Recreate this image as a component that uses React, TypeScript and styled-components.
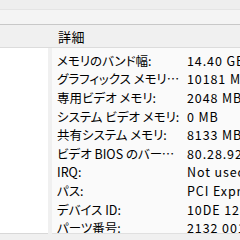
import styled, { createGlobalStyle } from "styled-components";

const GlobalStyle = createGlobalStyle`
  html, body {
    margin: 0;
    padding: 0;
    width: 240px;
    height: 240px;
    overflow: hidden;
    background: #f0f0f0;
  }
`;

// 情報の一覧データ
const rows: [string, string][] = [
  ["メモリのバンド幅:", "14.40 GB/s"],
  ["グラフィックス メモリの合計:", "10181 MB"],
  ["専用ビデオ メモリ:", "2048 MB"],
  ["システム ビデオ メモリ:", "0 MB"],
  ["共有システム メモリ:", "8133 MB"],
  ["ビデオ BIOS のバージョン:", "80.28.92.00.01"],
  ["IRQ:", "Not used"],
  ["パス:", "PCI Express x16 Gen2"],
  ["デバイス ID:", "10DE 1287 3626 1458"],
  ["パーツ番号:", "2132 0010"],
];

const Window = styled.div`
  width: 240px;
  height: 240px;
  display: flex;
  flex-direction: column;
  font-family: "Noto Sans CJK JP", "DejaVu Sans", sans-serif;
  color: #000;
`;

const Band = styled.div<{ $h: number; $bg: string; $line: string }>`
  height: ${(p) => p.$h}px;
  flex-shrink: 0;
  background: ${(p) => p.$bg};
  border-bottom: 1px solid ${(p) => p.$line};
`;

const HeaderBar = styled.div`
  height: 22px;
  flex-shrink: 0;
  background: #f0f0f0;
  border-bottom: 1px solid #dcdcdc;
  display: flex;
  align-items: center;
  padding-left: 58px;
  font-size: 13px;
  letter-spacing: 0.5px;
`;

const Body = styled.div`
  flex: 1;
  display: flex;
  min-height: 0;
`;

const LeftPane = styled.div`
  width: 48px;
  flex-shrink: 0;
  background: #ffffff;
  border-bottom: 1px solid #d8d8d8;
  margin-bottom: 6px;
`;

const Splitter = styled.div`
  width: 4px;
  flex-shrink: 0;
  background: #f0f0f0;
`;

const List = styled.div`
  flex: 1;
  background: #fafafa;
  padding: 3px 0 0 5px;
  border-bottom: 1px solid #e0e0e0;
  margin-bottom: 6px;
  overflow: hidden;
`;

const Row = styled.div`
  height: 18.6px;
  display: grid;
  grid-template-columns: 126px 1fr;
  column-gap: 4px;
  align-items: center;
  white-space: nowrap;
`;

const Label = styled.span`
  overflow: hidden;
  text-overflow: ellipsis;
  font-size: 12.5px;
  font-feature-settings: "palt";
`;

const Value = styled.span`
  overflow: hidden;
  font-size: 12.5px;
  letter-spacing: 0.9px;
`;

export default function App() {
  return (
    <>
      <GlobalStyle />
      <Window>
        <Band $h={9} $bg="#eeeeee" $line="#e4e4e4" />
        <Band $h={14} $bg="#f4f4f4" $line="#c8c8c8" />
        <HeaderBar>詳細</HeaderBar>
        <Body>
          <LeftPane />
          <Splitter />
          <List>
            {rows.map(([label, value]) => (
              <Row key={label}>
                <Label>{label}</Label>
                <Value>{value}</Value>
              </Row>
            ))}
          </List>
        </Body>
      </Window>
    </>
  );
}
